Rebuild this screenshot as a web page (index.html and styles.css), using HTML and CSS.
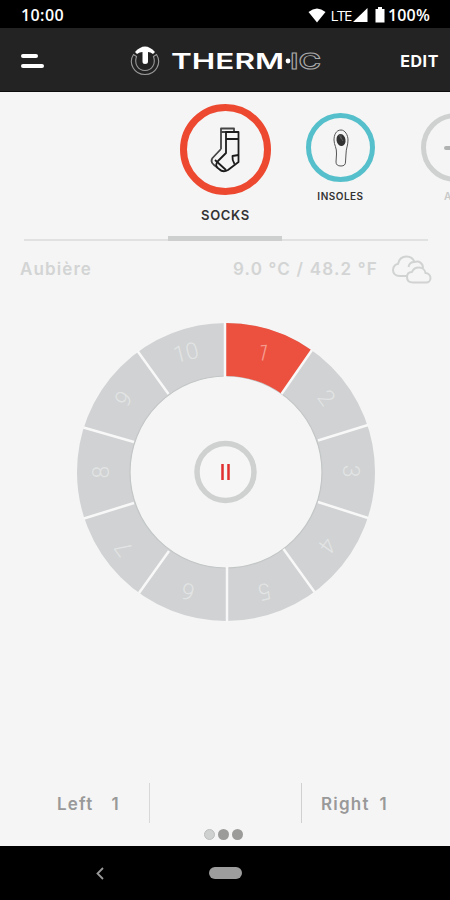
FILE: index.html
```html
<!DOCTYPE html>
<html lang="en">
<head>
    <meta charset="UTF-8">
    <meta name="viewport" content="width=device-width, initial-scale=1.0">
    <title>Therm-ic</title>
    <link rel="stylesheet" href="styles.css">
</head>
<body>
    <div class="status-bar">
        <span class="time">10:00</span>
        <div class="status-icons">
            <svg width="18" height="15" viewBox="0 0 18 15"><path d="M0.5 4Q9-3 17.500 4L9 14.500Z" fill="#fff"/></svg>
            <span class="lte">LTE</span>
            <svg class="signal" width="15" height="14" viewBox="0 0 15 14"><path d="M14.500 0V14H0Z" fill="#fff"/></svg>
            <svg class="battery" width="10" height="16" viewBox="0 0 10 16"><path d="M3 0H7V2H9.500V15.500H0.500V2H3Z" fill="#fff"/></svg>
            <span class="percent">100%</span>
        </div>
    </div>

    <div class="header">
        <button class="menu-btn" aria-label="Menu">
            <span class="menu-line short"></span>
            <span class="menu-line"></span>
        </button>
        <svg class="logo" width="194" height="36" viewBox="0 0 194 36">
            <path d="M3.500 11.500C-2 20 4 31.500 15 31.500S32 20 26.500 11.500L23.500 13.500C26 21 22 27.500 15 27.500S4 21 6.500 13.500Z" fill="none" stroke="#999" stroke-width="1.100"/>
            <path d="M5 9Q15-2 25 9L23 11Q20.500 9 18 9V18.500Q18 21 15 21Q12.500 21 12.500 18.500V9Q9.500 9 7 11Z" fill="#fff"/>
            <text class="logo-text" x="41" y="26" textLength="113" lengthAdjust="spacingAndGlyphs">THERM</text>
            <circle cx="158" cy="18" r="2.400" fill="#fff"/>
            <text class="logo-text outline" x="160" y="26" textLength="31" lengthAdjust="spacingAndGlyphs">IC</text>
        </svg>
        <button class="edit-btn">EDIT</button>
    </div>

    <div class="content">
        <div class="devices">
            <div class="device active">
                <div class="ring">
                    <svg width="32" height="46" viewBox="0 0 32 46" fill="none" stroke="#1c1c1c" stroke-width="1.800" stroke-linejoin="round">
                        <path d="M11 22V1.500H24V5M11 5H16M11 22L2.500 31Q0 35 4 38L8 41" stroke="#444"/>
                        <path d="M16 5H28.500V35L18 43Q13 46 9 42Q4 39 8 34L16 26Z"/>
                        <path d="M16 12H28.500M28.500 28L22.500 29Q22 33 24.500 37M5 33L16 43"/>
                    </svg>
                </div>
                <span class="device-name">SOCKS</span>
            </div>
            <div class="device">
                <div class="ring teal">
                    <svg width="16" height="38" viewBox="0 0 16 38">
                        <path d="M8 1C3 1 1 6 1 11C1 16 4 19 3.500 25L3 33Q3 37 8 37Q12.500 37 12.500 33L13 25C13 19 15 17 15 11C15 6 12 1 8 1Z" fill="none" stroke="#555"/>
                        <ellipse cx="8" cy="11" rx="4.500" ry="6" fill="#333" transform="rotate(-10 8 11)"/>
                        <path d="M6 6L10 12M8 5V10" stroke="#777" stroke-width="0.600"/>
                    </svg>
                </div>
                <span class="device-name">INSOLES</span>
            </div>
            <div class="device add">
                <div class="ring grey">
                    <svg width="24" height="24" viewBox="0 0 24 24"><path d="M2 12H22M12 2V22" stroke="#b0b2b1" stroke-width="4" stroke-linecap="round"/></svg>
                </div>
                <span class="device-name">ADD</span>
            </div>
        </div>

        <div class="scroll-track"><div class="scroll-thumb"></div></div>

        <div class="weather">
            <span class="city">Aubière</span>
            <span class="temperature">9.0 °C / 48.2 °F</span>
            <svg width="40" height="29" viewBox="0 0 40 29" fill="none" stroke="#d1d2d2" stroke-width="2" stroke-linejoin="round">
                <path d="M15 21H8C3 21 1 18 1 15C1 11 4 9 6 9C7 4 10 1.500 14.500 1.500C18 1.500 21 3 22.500 7C27 5.500 31 8 31 13"/>
                <path d="M16.500 12C17 9 19 7 22.500 7"/>
                <path d="M21 27.500C17 27.500 15 25 15 22C15 19 17 17 20 17C21 14 24 12.500 27 12.500C30 12.500 33 14.500 33.500 18C36 18 38.500 20 38.500 23C38.500 25.500 36.500 27.500 34 27.500Z"/>
            </svg>
        </div>

        <svg class="dial" width="300" height="300" viewBox="-150 -150 300 300">
            <circle r="122.500" fill="none" stroke="#d0d2d3" stroke-width="53"/>
            <circle r="96" fill="none" stroke="#c3c6c6" stroke-width="1.200"/>
            <path d="M-1-149A149 149 0 0 1 86-121.500L56-78A96 96 0 0 0-1-96Z" fill="#ec503e"/>
            <path class="dividers" d="M-1-150V-95M86-122L55.500-78M142-47L92-31.500M142 46L92 30M88.500 120L57.500 77M1 150V95M-87 121L-57 79M-142 46.500L-92 31M-142.500-44.500L-92-30M-88.500-121L-57.500-78"/>
            <g class="dial-numbers">
                <text class="selected" transform="translate(37.500 -119) rotate(14)">1</text>
                <text transform="translate(100 -74) rotate(54)">2</text>
                <text transform="translate(124 -1) rotate(90)">3</text>
                <text transform="translate(101 73) rotate(126)">4</text>
                <text transform="translate(39 119) rotate(166)">5</text>
                <text transform="translate(-38 119) rotate(194)">6</text>
                <text transform="translate(-102 76) rotate(234)">7</text>
                <text transform="translate(-125 0) rotate(270)">8</text>
                <text transform="translate(-102 -73) rotate(306)">9</text>
                <text transform="translate(-40 -119) rotate(346)">10</text>
            </g>
            <circle cx="-0.500" r="28.500" fill="#f6f6f6" stroke="#cfd1d1" stroke-width="5.500"/>
            <path d="M-3.500-8V8M2.500-8V8" stroke="#e0302f" stroke-width="2.500"/>
        </svg>

        <div class="levels">
            <div class="level left"><span>Left</span><span>1</span></div>
            <div class="level right"><span>Right</span><span>1</span></div>
        </div>

        <div class="pages">
            <span class="dot current"></span>
            <span class="dot"></span>
            <span class="dot"></span>
        </div>
    </div>

    <div class="nav-bar">
        <svg width="8" height="13" viewBox="0 0 8 13"><path d="M7 1L1.500 6.500L7 12" fill="none" stroke="#999" stroke-width="1.800"/></svg>
        <span class="home-pill"></span>
    </div>
</body>
</html>
```

FILE: styles.css
```css
* {
    margin: 0;
    padding: 0;
    box-sizing: border-box;
}

body {
    width: 450px;
    height: 900px;
    display: flex;
    flex-direction: column;
    overflow: hidden;
    background: #f5f5f5;
    font-family: Inter, 'Open Sans', sans-serif;
}

svg {
    display: block;
    flex: none;
}

button {
    background: none;
    border: none;
    font-family: inherit;
}

.status-bar {
    height: 28px;
    padding: 2px 20px 0 21px;
    display: flex;
    justify-content: space-between;
    align-items: center;
    background: #000;
    color: #fff;
    font-family: 'Open Sans', sans-serif;
    font-size: 16px;
}

.time {
    font-weight: 600;
    letter-spacing: 0.4px;
}

.status-icons {
    display: flex;
    align-items: center;
}

.lte {
    margin-left: 4px;
    font-size: 15px;
    letter-spacing: -1.3px;
}

.signal {
    margin-left: 2px;
}

.battery {
    margin: 0 3px 0 7px;
}

.percent {
    font-weight: 600;
    letter-spacing: 0.2px;
}

.header {
    height: 64px;
    padding: 2px 11px 0 21px;
    display: flex;
    align-items: center;
    background: #232323;
    border-bottom: 1px solid #0c0c0c;
}

.menu-btn {
    width: 23px;
    display: flex;
    flex-direction: column;
    gap: 6px;
}

.menu-line {
    width: 23px;
    height: 4px;
    border-radius: 2px;
    background: #fff;
}

.menu-line.short {
    width: 17px;
}

.logo {
    margin-left: 86px;
}

.logo-text {
    font-family: Inter, sans-serif;
    font-size: 22px;
    font-weight: 600;
    fill: #fff;
}

.logo-text.outline {
    fill: #232323;
    stroke: #aaa;
    stroke-width: 0.9px;
}

.edit-btn {
    margin-left: auto;
    color: #fff;
    font-size: 16px;
    font-weight: 700;
    letter-spacing: 0.6px;
}

.content {
    height: 754px;
    display: flex;
    flex-direction: column;
}

.devices {
    height: 144px;
    padding: 12px 0 0 180px;
    display: flex;
    align-items: flex-start;
    gap: 35px;
    overflow: hidden;
}

.device {
    width: 69px;
    padding-top: 9px;
    flex: none;
    display: flex;
    flex-direction: column;
    align-items: center;
}

.device.active {
    width: 91px;
    padding-top: 0;
}

.device.add {
    margin-left: 11px;
}

.ring {
    width: 69px;
    height: 69px;
    display: flex;
    justify-content: center;
    align-items: center;
    border-radius: 50%;
    border: 5px solid #cfd1d1;
}

.active .ring {
    width: 91px;
    height: 91px;
    border: 7px solid #ed4931;
}

.ring.teal {
    border-color: #55c0cb;
}

.device-name {
    margin-top: 8px;
    font-size: 10px;
    line-height: 12px;
    font-weight: 600;
    letter-spacing: 0.5px;
    color: #333;
}

.active .device-name {
    margin-top: 12px;
    font-size: 13px;
    line-height: 16px;
    letter-spacing: 0.7px;
}

.add .device-name {
    color: #c8c9c9;
}

.scroll-track {
    height: 6px;
    margin: 0 22px 0 24px;
    padding-left: 144px;
    background: linear-gradient(transparent 3px, #e0e1e1 3px, #e0e1e1 5px, transparent 5px);
}

.scroll-thumb {
    width: 114px;
    height: 5px;
    background: #cdcfce;
}

.weather {
    height: 52px;
    padding: 2px 18px 0 20px;
    display: flex;
    align-items: center;
    color: #d3d4d4;
    font-size: 17px;
    font-weight: 600;
}

.city {
    letter-spacing: 1.1px;
}

.temperature {
    margin-left: auto;
    margin-right: 14px;
    letter-spacing: 1.2px;
}

.dial {
    margin: 28px 0 0 76px;
}

.dividers {
    fill: none;
    stroke: #f8f8f8;
    stroke-width: 2.5px;
}

.dial-numbers text {
    font-family: Roboto, sans-serif;
    font-size: 23px;
    font-weight: 300;
    fill: #e2e4e4;
    text-anchor: middle;
    dominant-baseline: central;
}

.dial-numbers .selected {
    fill: #f59a8e;
}

.levels {
    height: 40px;
    margin-top: 161px;
    display: flex;
    justify-content: space-between;
    color: #999;
    font-size: 17px;
    font-weight: 600;
    letter-spacing: 1.2px;
}

.level {
    width: 150px;
    padding-top: 1px;
    display: flex;
    align-items: center;
}

.left {
    padding-left: 57px;
    gap: 18px;
    border-right: 1px solid #d8d8d8;
}

.right {
    width: 149px;
    padding-left: 19px;
    gap: 10px;
    border-left: 1px solid #d0d0d0;
}

.pages {
    margin-top: 6px;
    display: flex;
    justify-content: center;
    gap: 3px;
    padding-right: 4px;
}

.dot {
    width: 11px;
    height: 11px;
    border-radius: 50%;
    background: #9b9b99;
}

.dot.current {
    background: #cfd1d0;
    border: 1px solid #bcbebd;
}

.nav-bar {
    height: 54px;
    padding-left: 96px;
    display: flex;
    align-items: center;
    background: #000;
}

.home-pill {
    width: 33px;
    height: 12px;
    margin-left: 105px;
    border-radius: 6px;
    background: #9d9d9d;
}
```
